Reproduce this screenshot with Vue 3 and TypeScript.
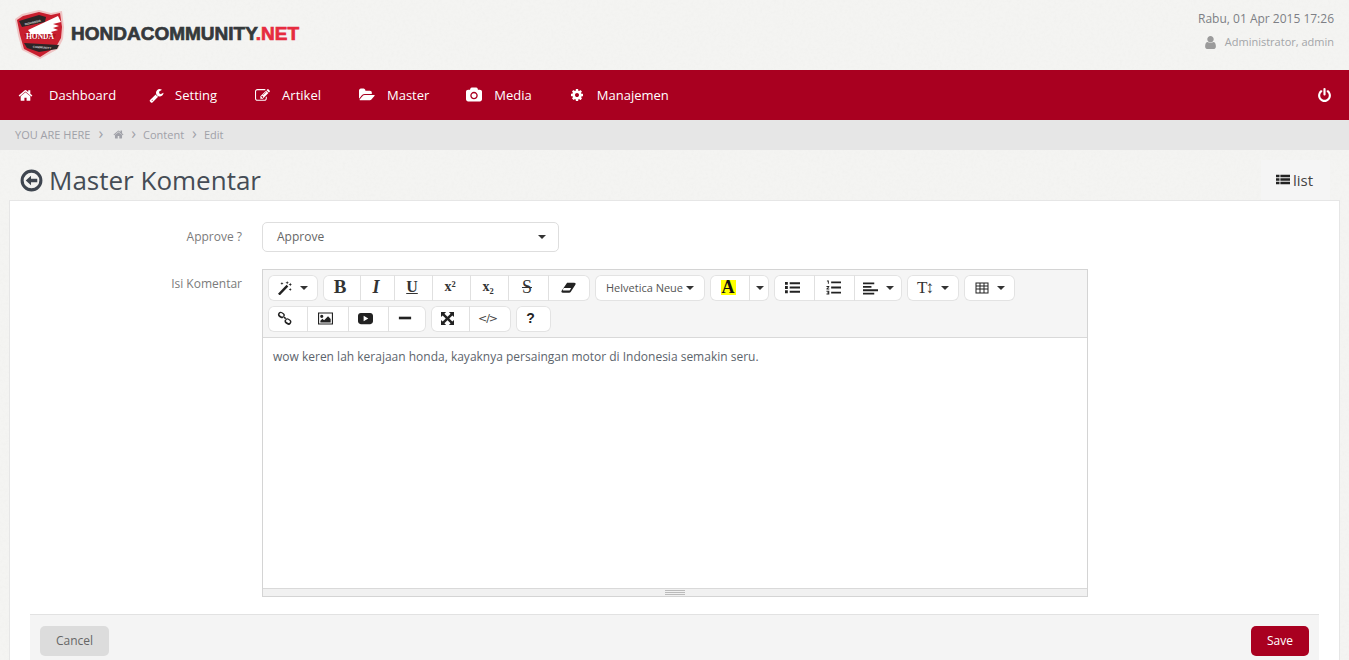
<script setup lang="ts">
interface Fa { vb: string; d: string }
const fa: Record<string, Fa> = {
  home: { vb: '0 0 1792 1792', d: 'M1472 992v480q0 26-19 45t-45 19h-384v-384h-256v384h-384q-26 0-45-19t-19-45v-480q0-1 .5-3t.5-3l575-474 575 474q1 2 1 6zm223-69l-62 74q-8 9-21 11h-3q-13 0-21-7l-692-577-692 577q-12 8-24 7-13-2-21-11l-62-74q-8-10-7-23.500t11-21.500l719-599q32-26 76-26t76 26l244 204v-195q0-14 9-23t23-9h192q14 0 23 9t9 23v408l219 182q10 8 11 21.500t-7 23.500z' },
  wrench: { vb: '0 0 1792 1792', d: 'M448 1472q0-26-19-45t-45-19-45 19-19 45 19 45 45 19 45-19 19-45zm644-420l-682 682q-37 37-90 37-52 0-91-37l-106-108q-38-36-38-90 0-53 38-91l681-681q39 98 114.500 173.500t173.500 114.500zm634-435q0 39-23 106-47 134-164.500 217.500t-258.500 83.500q-185 0-316.500-131.500t-131.500-316.500 131.500-316.500 316.500-131.500q58 0 121.500 16.500t107.500 46.500q16 11 16 28t-16 28l-293 169v224l193 107q5-3 79-48.500t135.500-81 70.500-35.500q15 0 23.500 10t8.500 25z' },
  edit: { vb: '0 0 1792 1792', d: 'M888 1184l116-116-152-152-116 116v56h96v96h56zm440-720q-16-16-33 1l-350 350q-17 17-1 33t33-1l350-350q17-17 1-33zm80 594v190q0 119-84.500 203.500t-203.500 84.500h-832q-119 0-203.500-84.500t-84.500-203.500v-832q0-119 84.500-203.500t203.500-84.500h832q63 0 117 25 15 7 18 23 3 17-9 29l-49 49q-14 14-32 8-23-6-45-6h-832q-66 0-113 47t-47 113v832q0 66 47 113t113 47h832q66 0 113-47t47-113v-126q0-13 9-22l64-64q15-15 35-7t20 29zm-96-738l288 288-672 672h-288v-288zm444 132l-92 92-288-288 92-92q28-28 68-28t68 28l152 152q28 28 28 68t-28 68z' },
  folder: { vb: '0 0 1920 1792', d: 'M1879 952q0 31-31 66l-336 396q-43 51-120.500 86.500t-143.500 35.500h-1088q-34 0-60.500-13t-26.500-43q0-31 31-66l336-396q43-51 120.500-86.500t143.500-35.500h1088q34 0 60.500 13t26.500 43zm-343-344v160h-832q-94 0-197 47.500t-164 119.500l-337 396-5 6q0-4-.5-12.500t-.5-12.500v-960q0-92 66-158t158-66h320q92 0 158 66t66 158v32h544q92 0 158 66t66 158z' },
  camera: { vb: '0 0 1920 1792', d: 'M960 672q119 0 203.500 84.500t84.500 203.500-84.500 203.500-203.500 84.500-203.500-84.500-84.500-203.500 84.500-203.500 203.500-84.500zm704-416q106 0 181 75t75 181v896q0 106-75 181t-181 75h-1408q-106 0-181-75t-75-181v-896q0-106 75-181t181-75h224l51-136q19-49 69.500-84.500t103.500-35.500h512q53 0 103.500 35.500t69.500 84.500l51 136h224zm-704 1152q185 0 316.500-131.500t131.500-316.500-131.500-316.500-316.500-131.500-316.500 131.500-131.500 316.500 131.500 316.500 316.500 131.500z' },
  cog: { vb: '0 0 1792 1792', d: 'M1152 896q0-106-75-181t-181-75-181 75-75 181 75 181 181 75 181-75 75-181zm512-109v222q0 12-8 23t-20 13l-185 28q-19 54-39 91 35 50 107 138 10 12 10 25t-9 23q-27 37-99 108t-94 71q-12 0-26-9l-138-108q-44 23-91 38-16 136-29 186-7 28-36 28h-222q-14 0-24.500-8.500t-11.500-21.500l-28-184q-49-16-90-37l-141 107q-10 9-25 9-14 0-25-11-126-114-165-168-7-10-7-23 0-12 8-23 15-21 51-66.500t54-70.500q-27-50-41-99l-183-27q-13-2-21-12.500t-8-23.500v-222q0-12 8-23t19-13l186-28q14-46 39-92-40-57-107-138-10-12-10-24 0-10 9-23 26-36 98.500-107.500t94.500-71.500q13 0 26 10l138 107q44-23 91-38 16-136 29-186 7-28 36-28h222q14 0 24.500 8.500t11.500 21.500l28 184q49 16 90 37l142-107q9-9 24-9 13 0 25 10 129 119 165 170 7 8 7 22 0 12-8 23-15 21-51 66.500t-54 70.500q26 50 41 98l183 28q13 2 21 12.500t8 23.500z' },
  power: { vb: '0 0 1792 1792', d: 'M1664 896q0 156-61 298t-164 245-245 164-298 61-298-61-245-164-164-245-61-298q0-182 80.500-343t226.500-270q43-32 95.500-25t83.500 50q32 42 24.500 94.500t-49.500 84.500q-98 74-151.500 181t-53.500 228q0 104 40.500 198.500t109.500 163.500 163.500 109.500 198.500 40.500 198.500-40.500 163.500-109.500 109.500-163.500 40.500-198.500q0-121-53.500-228t-151.500-181q-42-32-49.500-84.500t24.500-94.500q31-43 84-50t95 25q146 109 226.500 270t80.500 343zm-640-768v640q0 52-38 90t-90 38-90-38-38-90v-640q0-52 38-90t90-38 90 38 38 90z' },
  user: { vb: '0 0 1792 1792', d: 'M1536 1399q0 109-62.500 187t-150.500 78h-854q-88 0-150.500-78t-62.500-187q0-85 8.500-160.500t31.500-152 58.500-131 94-89 134.500-34.500q131 128 313 128t313-128q76 0 134.500 34.500t94 89 58.500 131 31.500 152 8.500 160.500zm-256-887q0 159-112.500 271.500t-271.500 112.500-271.500-112.500-112.500-271.500 112.500-271.500 271.500-112.500 271.500 112.500 112.500 271.500z' },
  thlist: { vb: '0 0 16 14', d: 'M0 1.500h4v3H0zM5 1.500h11v3H5zM0 5.500h4v3H0zM5 5.500h11v3H5zM0 9.500h4v3H0zM5 9.500h11v3H5z' },
  magic: { vb: '0 0 16 16', d: 'M0 14.500 9.800 4.300l2 2L2 16.500zM10.500 0l.5 1.500 1.500.5-1.500.5-.5 1.500-.5-1.500L8.500 2l1.500-.5zM4.500 1l.5 1.300 1.300.5-1.300.5-.5 1.300-.5-1.300-1.300-.5 1.300-.5zM14 2l.6 1.500 1.400.5-1.400.5L14 6l-.6-1.500L12 4l1.400-.5zM14 8l.5 1.200 1.200.5-1.200.5-.5 1.200-.5-1.200-1.200-.5 1.200-.5z' },
  eraser: { vb: '0 0 16 14', d: 'M6.500 2h7.500c1.500 0 2 .9 1.300 2L10.500 11.500c-.4.600-1 1-1.800 1H2c-1.500 0-2-1-1.300-2.100zM3 7.500l-1 2c-.2.500 0 .8.500.8h6c.5 0 .9-.2 1.100-.6L10.800 7.500z' },
  ul: { vb: '0 0 16 14', d: 'M0 1h3v3H0zM0 5.500h3v3H0zM0 10h3v3H0zM5 1.500h11v2H5zM5 6h11v2H5zM5 10.500h11v2H5z' },
  ol: { vb: '0 0 16 16', d: 'M1 .5h2v3.500H2V1.500H1zM.5 6.500h3v1L1.800 9h1.700v1h-3V9l1.700-1.500H.5zM.5 11.500h3v4h-3v-1h2v-.5h-1v-1h1v-.5h-2zM5.500 1.500H16v2H5.500zM5.500 7H16v2H5.500zM5.500 12.500H16v2H5.500z' },
  align: { vb: '0 0 16 14', d: 'M0 .5h12v2H0zM0 4.200h9v2H0zM0 7.900h16v2H0zM0 11.500h12v2H0z' },
  table: { vb: '0 0 14 12', d: 'M.5.500h13v11H.5zM1.500 1.500v2h3v-2zM5.500 1.500v2h3v-2zM9.500 1.500v2h3v-2zM1.500 4.500v2h3v-2zM5.500 4.500v2h3v-2zM9.500 4.500v2h3v-2zM1.500 7.500v3h3v-3zM5.500 7.500v3h3v-3zM9.500 7.500v3h3v-3z' },
  picture: { vb: '0 0 16 14', d: 'M0 .5h16v13H0zM1.200 1.700v10.600h13.600V1.700zM4 3a1.700 1.700 0 1 1 0 3.400A1.700 1.700 0 0 1 4 3zM2.500 11.200V9.300l2.200-2 1.800 1.600 4.200-4.300 2.800 2.800v3.800z' },
  video: { vb: '0 0 16 14', d: 'M3 1h10c1.700 0 3 1.300 3 3v6c0 1.700-1.300 3-3 3H3c-1.700 0-3-1.300-3-3V4c0-1.700 1.300-3 3-3zM6 4v6l5-3z' },
  minus: { vb: '0 0 16 14', d: 'M1 5.500h14v3H1z' },
  expand: { vb: '0 0 14 14', d: 'M0 0h5.500L3.700 1.800 7 5.100 10.300 1.800 8.500 0H14v5.500L12.200 3.700 8.900 7l3.300 3.300L14 8.500V14H8.500l1.800-1.800L7 8.900 3.700 12.200 5.500 14H0V8.500l1.800 1.800L5.100 7 1.800 3.700 0 5.500z' },
  link: { vb: '0 0 16 16', d: 'M1 3.500a3 3 0 0 1 4.500-2.300l1.300.8a3 3 0 0 1 1 4.200 3 3 0 0 1-4.200 1L2.300 6.400A3 3 0 0 1 1 3.500zM2.900 2.800c-.5.700-.2 1.600.5 2l1.200.8c.7.400 1.500.3 2-.4s.2-1.500-.5-2l-1.200-.8c-.7-.4-1.500-.3-2 .4zM8 10.500a3 3 0 0 1 4.500-2.300l1.300.8a3 3 0 0 1 1 4.200 3 3 0 0 1-4.200 1l-1.300-.8A3 3 0 0 1 8 10.500zM9.900 9.800c-.5.700-.2 1.600.5 2l1.200.8c.7.400 1.500.3 2-.4s.2-1.500-.5-2l-1.200-.8c-.7-.4-1.500-.3-2 .4zM6.500 6.700l1.200-1.200 2.700 2.600-1.200 1.200z' },
}

interface NavItem { icon: string; label: string; w: number; box: number }
const nav: NavItem[] = [
  { icon: 'home', label: 'Dashboard', w: 15, box: 30 },
  { icon: 'wrench', label: 'Setting', w: 15, box: 26 },
  { icon: 'edit', label: 'Artikel', w: 15, box: 27 },
  { icon: 'folder', label: 'Master', w: 16, box: 28 },
  { icon: 'camera', label: 'Media', w: 16, box: 28 },
  { icon: 'cog', label: 'Manajemen', w: 14, box: 27 },
]

interface Btn { w: number; icon?: string; size?: number; text?: string; cls?: string; caret?: boolean }
const rows: Btn[][][] = [
  [
    [{ w: 50, icon: 'magic', size: 14, caret: true }],
    [
      { w: 37, text: 'B', cls: 'g-b' },
      { w: 34, text: 'I', cls: 'g-i' },
      { w: 38, text: 'U', cls: 'g-u' },
      { w: 38, text: 'x²', cls: 'g-x' },
      { w: 38, text: 'x₂', cls: 'g-x' },
      { w: 40, text: 'S', cls: 'g-s' },
      { w: 42, icon: 'eraser', size: 15 },
    ],
    [{ w: 110, text: 'Helvetica Neue', cls: 'g-font', caret: true }],
    [
      { w: 39, text: 'A', cls: 'g-a' },
      { w: 20, caret: true },
    ],
    [
      { w: 40, icon: 'ul', size: 15 },
      { w: 40, icon: 'ol', size: 15 },
      { w: 48, icon: 'align', size: 15, caret: true },
    ],
    [{ w: 52, text: 'T↕', cls: 'g-t', caret: true }],
    [{ w: 51, icon: 'table', size: 14, caret: true }],
  ],
  [
    [
      { w: 39, icon: 'link', size: 15 },
      { w: 41, icon: 'picture', size: 15 },
      { w: 40, icon: 'video', size: 15 },
      { w: 38, icon: 'minus', size: 14 },
    ],
    [
      { w: 38, icon: 'expand', size: 13 },
      { w: 42, text: '</>', cls: 'g-code' },
    ],
    [{ w: 35, text: '?', cls: 'g-q' }],
  ],
]

function groupWidth(g: Btn[]): number {
  return g.reduce((sum, b) => sum + b.w, 0)
}
</script>

<template>
  <div class="page">
    <svg class="texture" aria-hidden="true">
      <filter id="paper">
        <feTurbulence type="fractalNoise" baseFrequency="0.35" numOctaves="3" seed="4" />
        <feColorMatrix type="matrix" values="0 0 0 0 0.55  0 0 0 0 0.55  0 0 0 0 0.52  0.5 0.5 0 0 -0.42" />
      </filter>
      <rect width="100%" height="100%" filter="url(#paper)" opacity="0.14" />
    </svg>

    <header class="top">
      <div class="brand">
        <svg class="shield" viewBox="0 0 50 50" aria-hidden="true">
          <path d="M0 9 7 4 24 0 36 3 47 1 49 17 48 29 43 39 25 49 7 40 3 25Z" fill="#efc4c4" />
          <path d="M2 10 8 6 24 2 36 5 45 3 47 17 46 28 41 37 25 47 9 39 5 25Z" fill="#c81e2e" />
          <path d="M4 11 24 5 31 7 30 12 7 17Z" fill="#2b2526" />
          <path d="M9 33 44 35 42 39 24 42 12 38Z" fill="#2b2526" />
          <path d="M13 20 43 6 46 12 38 14 44 16 38 18 43 20 36 22 38 24 17 25Z" fill="#fff" />
          <path d="M9 24H41L39 29H12Z" fill="#b5121f" />
          <text x="25" y="28.500" text-anchor="middle" class="shield-honda">HONDA</text>
          <text x="18" y="13.500" text-anchor="middle" class="shield-small" transform="rotate(-13 18 13)">INDONESIA</text>
          <text x="27" y="38.500" text-anchor="middle" class="shield-small" transform="rotate(4 27 38)">COMMUNITY</text>
        </svg>
        <div class="wordmark">HONDACOMMUNITY<span>.NET</span></div>
      </div>
      <div class="meta">
        <div class="date">Rabu, 01 Apr 2015 17:26</div>
        <div class="who">
          <svg class="who-icon" :viewBox="fa.user.vb" aria-hidden="true"><path :d="fa.user.d" /></svg>
          <span>Administrator, admin</span>
        </div>
      </div>
    </header>

    <nav class="nav">
      <a v-for="item in nav" :key="item.label" class="nav-item">
        <span class="nav-icon" :style="{ width: item.box + 'px' }">
          <svg :viewBox="fa[item.icon].vb" :width="item.w" :height="item.w" aria-hidden="true"><path :d="fa[item.icon].d" /></svg>
        </span>
        <span>{{ item.label }}</span>
      </a>
      <a class="nav-power">
        <svg :viewBox="fa.power.vb" width="15" height="15" aria-hidden="true"><path :d="fa.power.d" /></svg>
      </a>
    </nav>

    <div class="crumbs">
      <span>YOU ARE HERE</span>
      <span class="sep">›</span>
      <svg :viewBox="fa.home.vb" width="11" height="11" aria-hidden="true"><path :d="fa.home.d" /></svg>
      <span class="sep">›</span>
      <span>Content</span>
      <span class="sep">›</span>
      <span>Edit</span>
    </div>

    <div class="title-bar">
      <h1 class="title">
        <svg class="back" viewBox="0 0 24 24" aria-hidden="true">
          <circle cx="12" cy="12" r="9.800" fill="none" stroke="#3f4650" stroke-width="3.200" />
          <path d="M6 12l5.500-5v3.300H18v3.400h-6.500V17z" fill="#3f4650" />
        </svg>
        <span>Master Komentar</span>
      </h1>
      <a class="list-tab">
        <svg :viewBox="fa.thlist.vb" width="14" height="13" aria-hidden="true"><path :d="fa.thlist.d" /></svg>
        <span>list</span>
      </a>
    </div>

    <main class="card">
      <div class="form-row">
        <label class="form-label">Approve ?</label>
        <div class="select">
          <span>Approve</span>
          <i class="caret"></i>
        </div>
      </div>
      <div class="form-row editor-row">
        <label class="form-label">Isi Komentar</label>
        <div class="editor">
          <div class="toolbar">
            <div v-for="(row, r) in rows" :key="r" class="tool-row">
              <div v-for="(group, g) in row" :key="g" class="tool-group" :style="{ width: groupWidth(group) + 'px' }">
                <div v-for="(b, i) in group" :key="i" class="tool-btn" :class="{ plain: !b.caret }" :style="{ width: b.w + 'px' }">
                  <svg v-if="b.icon" :viewBox="fa[b.icon].vb" :width="b.size" :height="b.size" fill-rule="evenodd" aria-hidden="true"><path :d="fa[b.icon].d" /></svg>
                  <span v-if="b.text" :class="b.cls">{{ b.text }}</span>
                  <i v-if="b.caret" class="caret"></i>
                </div>
              </div>
            </div>
          </div>
          <div class="editor-body">wow keren lah kerajaan honda, kayaknya persaingan motor di Indonesia semakin seru.</div>
          <div class="editor-status"><i></i><i></i><i></i></div>
        </div>
      </div>
      <footer class="actions">
        <button class="btn btn-cancel" type="button">Cancel</button>
        <button class="btn btn-save" type="button">Save</button>
      </footer>
    </main>
  </div>
</template>

<style>
html, body { margin: 0; overflow: hidden; background: #f4f4f2; }
</style>

<style scoped>
.page {
  position: relative;
  height: 660px;
  overflow: hidden;
  font-family: "Open Sans", "Liberation Sans", sans-serif;
  font-size: 12px;
  color: #666;
}
.texture { position: absolute; inset: 0; width: 100%; height: 100%; pointer-events: none; }
.top {
  position: relative;
  height: 70px;
  display: flex;
  justify-content: space-between;
  box-sizing: border-box;
  padding: 10px 15px 0;
}
.brand { display: flex; align-items: flex-start; }
.shield { width: 50px; height: 50px; }
.shield-honda { font: 900 7.500px "Liberation Serif", serif; fill: #fff; }
.shield-small { font: 700 3px "Liberation Sans", sans-serif; fill: #ddd; }
.wordmark {
  margin: 12px 0 0 6px;
  font-family: "Liberation Sans", Arial, sans-serif;
  font-weight: 700;
  font-size: 19px;
  line-height: 24px;
  letter-spacing: 0;
  color: #35393b;
  -webkit-text-stroke: 0.7px #35393b;
}
.wordmark span { color: #e62b3f; -webkit-text-stroke-color: #e62b3f; }
.meta { text-align: right; }
.date { color: #7d7f85; font-size: 12px; line-height: 18px; }
.who {
  display: flex;
  justify-content: flex-end;
  align-items: center;
  gap: 7px;
  margin-top: 5px;
  color: #a3a5a8;
  font-size: 11px;
  line-height: 18px;
}
.who-icon { width: 15px; height: 15px; fill: #9b9b9b; }

.nav {
  position: relative;
  height: 50px;
  display: flex;
  align-items: center;
  background: #a90020;
  color: #fff;
  font-size: 13px;
}
.nav-item { display: flex; align-items: center; padding: 0 19px; }
.nav-item:first-child { padding-left: 18px; padding-right: 14px; }
.nav-item:first-child .nav-icon { margin-right: 1px; }
.nav-item:nth-child(4) { padding-right: 18px; }
.nav-icon { display: flex; align-items: center; }
.nav-icon svg, .nav-power svg { fill: #fff; }
.nav-power { margin-left: auto; margin-right: 17px; display: flex; }

.crumbs {
  position: relative;
  height: 30px;
  box-sizing: border-box;
  padding: 0 0 2px 15px;
  display: flex;
  align-items: center;
  gap: 8px;
  background: #e6e6e6;
  color: #a0a1a8;
  font-size: 11px;
}
.crumbs svg { fill: #a0a1a8; margin: 0 -1px 0 3px; }
.sep { font-size: 16px; line-height: 14px; margin: -2px -1px 0 0; }

.title-bar {
  position: relative;
  height: 51px;
  display: flex;
  justify-content: space-between;
  align-items: flex-end;
  padding: 0 19px 0 20px;
}
.title {
  margin: 0 0 3px;
  display: flex;
  align-items: center;
  gap: 6px;
  font-size: 26px;
  font-weight: 400;
  line-height: 36px;
  color: #454c55;
}
.back { width: 23px; height: 23px; }
.list-tab {
  width: 69px;
  height: 41px;
  box-sizing: border-box;
  padding: 0 2px 2px 0;
  display: flex;
  align-items: center;
  justify-content: center;
  gap: 3px;
  background: #f5f5f5;
  color: #444;
  font-size: 15px;
}
.list-tab svg { fill: #222; }

.card {
  position: relative;
  margin: 0 10px;
  background: #fff;
  box-shadow: 0 0 0 1px #e6e6e6;
  padding: 21px 20px 0;
}
.form-row { display: flex; align-items: center; }
.form-label {
  width: 232px;
  padding: 0 20px 2px 0;
  box-sizing: border-box;
  text-align: right;
  color: #7b7b7b;
  font-size: 12px;
  flex: none;
}
.select {
  width: 297px;
  height: 30px;
  box-sizing: border-box;
  display: flex;
  align-items: center;
  justify-content: space-between;
  padding: 0 12px 2px 14px;
  border: 1px solid #dedede;
  border-radius: 5px;
  color: #666;
}
.caret {
  display: inline-block;
  width: 0;
  height: 0;
  border-left: 4px solid transparent;
  border-right: 4px solid transparent;
  border-top: 4px solid #333;
}
.select .caret { margin-top: 2px; }
.editor-row { align-items: flex-start; margin-top: 17px; }
.editor-row .form-label { padding-top: 6px; }
.editor {
  width: 826px;
  height: 328px;
  box-sizing: border-box;
  display: flex;
  flex-direction: column;
  border: 1px solid #d4d4d4;
}
.toolbar {
  height: 68px;
  box-sizing: border-box;
  padding: 5px 5px 0;
  display: flex;
  flex-direction: column;
  gap: 5px;
  background: #f5f5f5;
  border-bottom: 1px solid #d9d9d9;
}
.tool-row { display: flex; gap: 5px; }
.tool-group {
  height: 26px;
  display: flex;
  background: #fff;
  border-radius: 6px;
  box-shadow: inset 0 0 0 1px #e3e3e3;
}
.tool-btn {
  box-sizing: border-box;
  display: flex;
  align-items: center;
  justify-content: center;
  gap: 6px;
  color: #333;
  flex: none;
}
.tool-btn.plain { padding: 0 3px 2px 0; }
.tool-row:last-child .tool-btn.plain { padding-right: 6px; }
.tool-btn + .tool-btn { border-left: 1px solid #e0e0e0; }
.tool-btn svg { fill: #222; }
.tool-btn svg + .caret { margin-left: 2px; }
.g-b { font: 700 19px "Liberation Serif", serif; color: #333; }
.g-i { font: italic 700 18px "Liberation Serif", serif; color: #333; }
.g-u { font: 700 16px "Liberation Serif", serif; text-decoration: underline; color: #333; }
.g-x { font: 700 14px "Liberation Serif", serif; color: #333; }
.g-s { font: 400 18px "Liberation Serif", serif; text-decoration: line-through; color: #333; }
.g-font { font-size: 11px; color: #555; margin: -1px -3px 0 0; }
.g-a { font: 700 18px/15px "Liberation Serif", serif; color: #111; background: #ff0; padding: 0 1px; }
.g-t { font: 400 17px "Liberation Serif", serif; color: #333; letter-spacing: -2px; margin-right: 3px; }
.g-code { font: 400 11px "DejaVu Sans", sans-serif; color: #444; letter-spacing: -1px; }
.g-q { font: 700 14px "Liberation Sans", sans-serif; color: #222; }
.editor-body {
  flex: 1;
  padding: 10px 10px 0;
  color: #5c646c;
  font-size: 12px;
  line-height: 18px;
}
.editor-status {
  height: 8px;
  box-sizing: border-box;
  display: flex;
  flex-direction: column;
  align-items: center;
  justify-content: center;
  gap: 1px;
  background: #f1f1f1;
  border-top: 1px solid #d9d9d9;
}
.editor-status i { display: block; width: 20px; height: 1px; background: #bbb; }
.actions {
  margin-top: 17px;
  height: 50px;
  box-sizing: border-box;
  padding: 11px 10px 0;
  display: flex;
  justify-content: space-between;
  align-items: flex-start;
  background: #f4f4f4;
  border-top: 1px solid #e2e2e2;
}
.btn {
  height: 30px;
  border: 0;
  border-radius: 5px;
  font-family: inherit;
  font-size: 12px;
  padding: 0 0 2px;
}
.btn-cancel { width: 69px; background: #dcdcdc; color: #666; }
.btn-save { width: 58px; background: #a90020; color: #fff; }
</style>
